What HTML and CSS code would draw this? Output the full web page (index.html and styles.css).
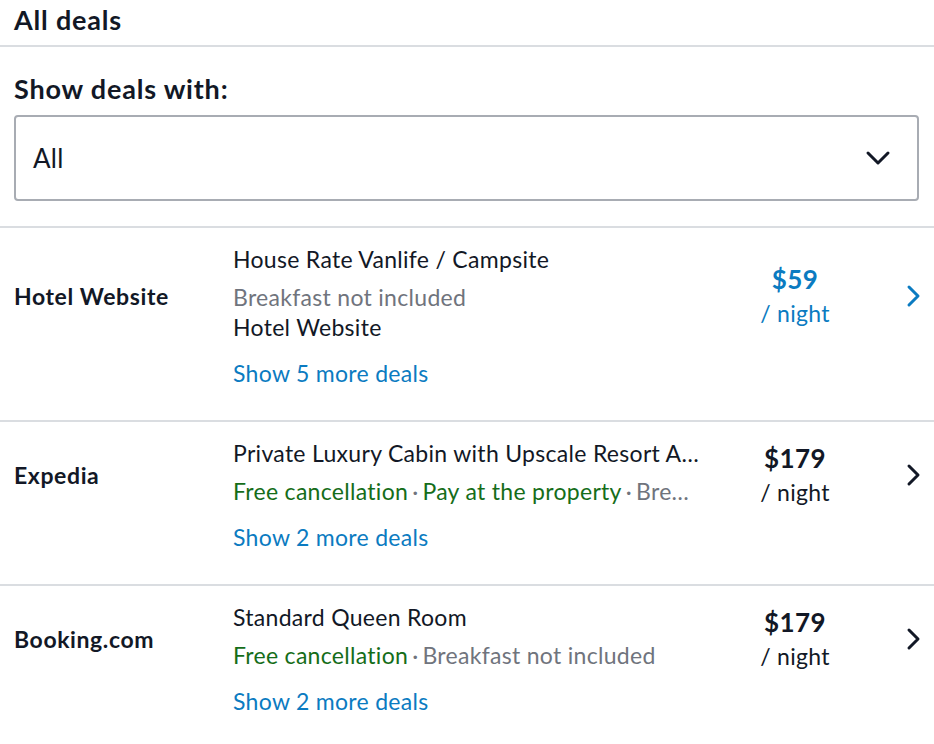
FILE: index.html
```html
<!DOCTYPE html>
<html lang="en">
<head>
<meta charset="utf-8">
<title>All deals</title>
<link rel="stylesheet" href="styles.css">
</head>
<body>
<header class="top">
  <h1 class="title">All deals</h1>
</header>
<section class="filter">
  <h2 class="filter-label">Show deals with:</h2>
  <div class="select">
    <span class="select-value">All</span>
    <svg class="select-chevron" width="26" height="16" viewBox="0 0 26 16" aria-hidden="true">
      <path d="M3 3 L13 13 L23 3" fill="none" stroke="#121826" stroke-width="3" stroke-linecap="round" stroke-linejoin="round"/>
    </svg>
  </div>
</section>
<ul class="deals">
  <li class="deal">
    <div class="provider">Hotel Website</div>
    <div class="details">
      <div class="room">House Rate Vanlife / Campsite</div>
      <div class="line muted gap">Breakfast not included</div>
      <div class="line">Hotel Website</div>
    </div>
    <div class="price price-blue">
      <div class="amount">$59</div>
      <div class="per">/ night</div>
    </div>
    <svg class="chevron" width="16" height="24" viewBox="0 0 16 24" aria-hidden="true">
      <path d="M3 3 L12 12 L3 21" fill="none" stroke="#0b7bc1" stroke-width="3" stroke-linecap="round" stroke-linejoin="round"/>
    </svg>
    <a class="more" href="#">Show 5 more deals</a>
  </li>
  <li class="deal">
    <div class="provider">Expedia</div>
    <div class="details">
      <div class="room">Private Luxury Cabin with Upscale Resort A…</div>
      <div class="line gap"><span class="green">Free cancellation</span><span class="dot">·</span><span class="green">Pay at the property</span><span class="dot">·</span><span class="muted">Bre…</span></div>
    </div>
    <div class="price">
      <div class="amount">$179</div>
      <div class="per">/ night</div>
    </div>
    <svg class="chevron" width="16" height="24" viewBox="0 0 16 24" aria-hidden="true">
      <path d="M3 3 L12 12 L3 21" fill="none" stroke="#121826" stroke-width="3" stroke-linecap="round" stroke-linejoin="round"/>
    </svg>
    <a class="more" href="#">Show 2 more deals</a>
  </li>
  <li class="deal">
    <div class="provider">Booking.com</div>
    <div class="details">
      <div class="room">Standard Queen Room</div>
      <div class="line gap"><span class="green">Free cancellation</span><span class="dot">·</span><span class="muted">Breakfast not included</span></div>
    </div>
    <div class="price">
      <div class="amount">$179</div>
      <div class="per">/ night</div>
    </div>
    <svg class="chevron" width="16" height="24" viewBox="0 0 16 24" aria-hidden="true">
      <path d="M3 3 L12 12 L3 21" fill="none" stroke="#121826" stroke-width="3" stroke-linecap="round" stroke-linejoin="round"/>
    </svg>
    <a class="more" href="#">Show 2 more deals</a>
  </li>
</ul>
</body>
</html>
```

FILE: styles.css
```css
* { box-sizing: border-box; }

html, body {
  margin: 0;
  padding: 0;
  background: #ffffff;
}

body {
  font-family: Lato, "Noto Sans", "Liberation Sans", sans-serif;
  color: #121826;
  font-size: 23px;
  letter-spacing: 0.3px;
  width: 934px;
  overflow: hidden;
}

.top {
  padding: 0 15px 0 14px;
  border-bottom: 2px solid #dadde1;
  height: 47px;
}

.title {
  margin: 0;
  font-size: 27px;
  font-weight: 700;
  letter-spacing: 0.8px;
  line-height: 40px;
}

.filter {
  padding: 27px 15px 25px 14px;
  border-bottom: 2px solid #dadde1;
}

.filter-label {
  margin: 0;
  font-size: 27px;
  font-weight: 700;
  letter-spacing: 0.8px;
  line-height: 30px;
}

.select {
  margin-top: 11px;
  height: 86px;
  border: 2px solid #a8acb3;
  border-radius: 4px;
  display: flex;
  align-items: center;
  justify-content: space-between;
  padding: 0 26px 0 17px;
}

.select-value {
  font-size: 26px;
  line-height: 30px;
}

.select-chevron { display: block; }

.deals {
  list-style: none;
  margin: 0;
  padding: 0;
}

.deal {
  display: grid;
  grid-template-columns: 219px 472px 180px 1fr;
  grid-template-rows: auto auto;
  align-items: center;
  padding: 16px 14px 32px 14px;
  border-bottom: 2px solid #dadde1;
}

.provider {
  grid-column: 1;
  grid-row: 1;
  font-weight: 700;
  font-size: 23px;
  letter-spacing: 0.6px;
  line-height: 30px;
}

.details {
  grid-column: 2;
  grid-row: 1;
  padding-bottom: 6px;
  min-width: 0;
}

.room, .line {
  line-height: 30px;
  white-space: nowrap;
  overflow: hidden;
}

.gap { margin-top: 8px; }

.muted { color: #70747d; }
.green { color: #156d19; }
.dot {
  color: #70747d;
  margin: 0 4px;
}

.price {
  grid-column: 3;
  grid-row: 1;
  text-align: center;
  line-height: 34px;
}

.amount {
  font-weight: 700;
  font-size: 26px;
  letter-spacing: 0.4px;
}

.per { font-size: 23px; }

.price-blue { color: #0b7bc1; }

.chevron {
  grid-column: 4;
  grid-row: 1;
  justify-self: end;
  display: block;
  margin-right: -2px;
}

.more {
  grid-column: 2;
  grid-row: 2;
  margin-top: 10px;
  line-height: 30px;
  color: #0b7bc1;
  text-decoration: none;
  justify-self: start;
}
```
